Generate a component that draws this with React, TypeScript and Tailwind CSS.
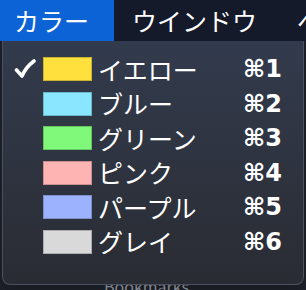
const items = [
  { label: 'イエロー', color: '#ffe03c', key: '1', checked: true },
  { label: 'ブルー', color: '#8ae6ff', key: '2' },
  { label: 'グリーン', color: '#80f97a', key: '3' },
  { label: 'ピンク', color: '#ffb4b4', key: '4' },
  { label: 'パープル', color: '#9cb2ff', key: '5' },
  { label: 'グレイ', color: '#d9d9d9', key: '6' },
];

export default function App() {
  return (
    <div
      className="relative h-[290px] w-[306px] overflow-hidden bg-[#1d2028] text-white"
      style={{ fontFamily: '"Noto Sans CJK JP", "Noto Sans", sans-serif' }}
    >
      <div className="flex h-[41px] items-center whitespace-nowrap bg-[#141a29] text-[25px] leading-none">
        <div className="flex h-full w-[114px] shrink-0 items-center bg-[#0b63d6] pl-[14px]">カラー</div>
        <div className="shrink-0 pl-[18px]">ウインドウ</div>
        <div className="shrink-0 pl-[40px]">ペ</div>
      </div>

      <div className="absolute bottom-[-4px] left-[104px] text-[16px] leading-none text-[#8d939c]">Bookmarks</div>

      <div className="absolute left-[2px] top-[41px] h-[244px] w-[302px] rounded-b-[8px] border border-t-0 border-[#4b515e] bg-gradient-to-b from-[#323b4d] to-[#2a2c33] pt-[11px] shadow-lg">
        {items.map((it) => (
          <div key={it.key} className="flex h-[34.5px] items-center">
            <div className="flex w-[40px] justify-center pl-[4px]">
              {it.checked && (
                <svg width="22" height="20" viewBox="0 0 22 20" fill="none">
                  <path
                    d="M2.5 11 L8 17 Q12 8 20 2"
                    stroke="white"
                    strokeWidth="3.6"
                    strokeLinecap="round"
                    strokeLinejoin="round"
                  />
                </svg>
              )}
            </div>
            <div
              className="h-[24px] w-[49px] border border-black/20"
              style={{ backgroundColor: it.color }}
            />
            <div className="flex-1 pl-[6px] text-[25px] leading-none">{it.label}</div>
            <div
              className="w-[60px] text-[24px] font-semibold leading-none"
              style={{ fontFamily: '"DejaVu Sans", sans-serif' }}
            >
              ⌘{it.key}
            </div>
          </div>
        ))}
      </div>
    </div>
  );
}
